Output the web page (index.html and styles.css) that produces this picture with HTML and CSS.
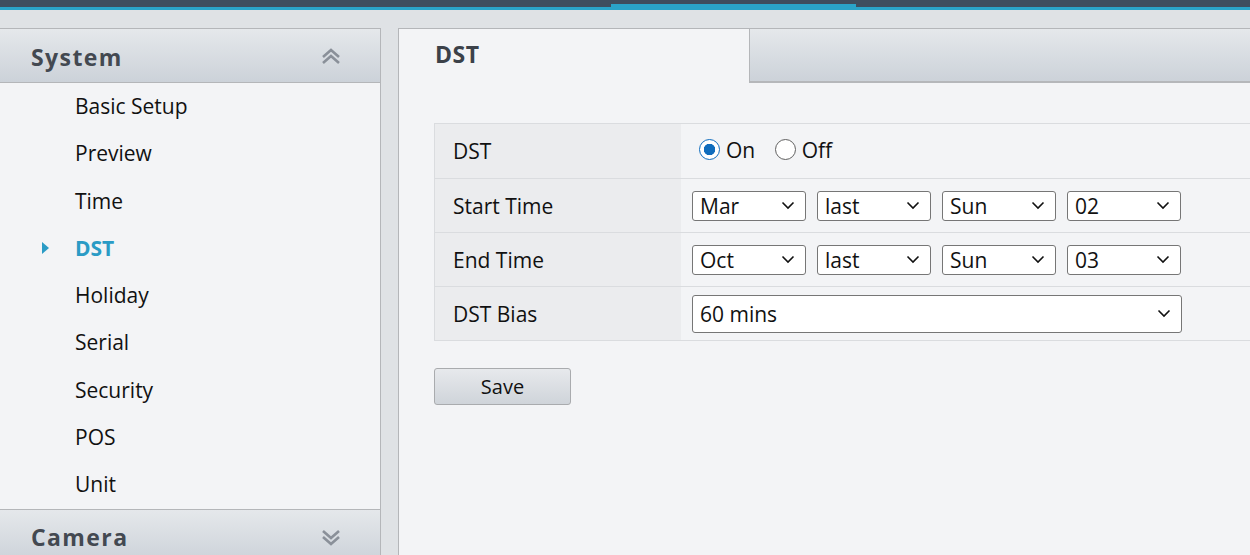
FILE: index.html
```html
<!DOCTYPE html>
<html lang="en">
<head>
    <meta charset="UTF-8">
    <title>DST</title>
    <link rel="stylesheet" href="styles.css">
</head>
<body>
    <div class="topbar">
        <div class="topbar-active"></div>
    </div>

    <div class="main">
        <div class="sidebar">
            <div class="group-head">
                <span>System</span>
                <svg class="chev" width="22" height="18" viewBox="0 0 22 18">
                    <path d="M3 9 L11 2 L19 9 M3 15 L11 8 L19 15" fill="none" stroke="#8a9099" stroke-width="2.6"/>
                </svg>
            </div>
            <ul class="menu">
                <li>Basic Setup</li>
                <li>Preview</li>
                <li>Time</li>
                <li class="active">DST</li>
                <li>Holiday</li>
                <li>Serial</li>
                <li>Security</li>
                <li>POS</li>
                <li>Unit</li>
            </ul>
            <div class="group-head">
                <span>Camera</span>
                <svg class="chev" width="22" height="18" viewBox="0 0 22 18">
                    <path d="M3 3 L11 10 L19 3 M3 9 L11 16 L19 9" fill="none" stroke="#8a9099" stroke-width="2.6"/>
                </svg>
            </div>
        </div>

        <div class="content">
            <div class="tabs">
                <div class="tab">DST</div>
                <div class="tab-rest"></div>
            </div>

            <table class="form">
                <tr>
                    <td class="label">DST</td>
                    <td class="value">
                        <label class="radio"><input type="radio" name="dst" checked> On</label>
                        <label class="radio"><input type="radio" name="dst"> Off</label>
                    </td>
                </tr>
                <tr>
                    <td class="label">Start Time</td>
                    <td class="value">
                        <div class="selects">
                            <select><option>Mar</option></select>
                            <select><option>last</option></select>
                            <select><option>Sun</option></select>
                            <select><option>02</option></select>
                        </div>
                    </td>
                </tr>
                <tr>
                    <td class="label">End Time</td>
                    <td class="value">
                        <div class="selects">
                            <select><option>Oct</option></select>
                            <select><option>last</option></select>
                            <select><option>Sun</option></select>
                            <select><option>03</option></select>
                        </div>
                    </td>
                </tr>
                <tr>
                    <td class="label">DST Bias</td>
                    <td class="value">
                        <select class="wide"><option>60 mins</option></select>
                    </td>
                </tr>
            </table>

            <button class="save">Save</button>
        </div>
    </div>
</body>
</html>
```

FILE: styles.css
```css
body {
    margin: 0;
    background-color: #dfe2e5;
    font-family: "Open Sans", "Noto Sans", sans-serif;
    color: #111;
    height: 555px;
    overflow: hidden;
}
.topbar {
    height: 7px;
    background-color: #3e4d5e;
    border-bottom: 3px solid #2aa3c8;
    display: flex;
    align-items: flex-end;
}
.topbar-active {
    margin-left: 611px;
    width: 245px;
    height: 3px;
    background-color: #2aa3c8;
}
.main {
    display: flex;
    gap: 17px;
    margin-top: 18px;
    height: 527px;
    overflow: hidden;
}
.sidebar {
    width: 381px;
    flex-shrink: 0;
    background-color: #f3f4f6;
    border-top: 1px solid #b4b6b9;
    border-right: 1px solid #b4b6b9;
    box-sizing: border-box;
    overflow: hidden;
}
.group-head {
    height: 54px;
    display: flex;
    align-items: center;
    justify-content: space-between;
    padding: 3px 38px 0 31px;
    box-sizing: border-box;
    background: linear-gradient(#e5e8eb, #ccd2d9);
    border-bottom: 1px solid #b4b6b9;
    font-size: 23px;
    font-weight: bold;
    letter-spacing: 1.4px;
    color: #434951;
}
.menu + .group-head {
    border-top: 1px solid #b4b6b9;
}
.menu {
    list-style: none;
    margin: 0;
    padding: 0;
}
.menu li {
    height: 47.3px;
    line-height: 47px;
    padding-left: 75px;
    font-size: 21px;
    position: relative;
}
.menu li.active {
    color: #2a9bc5;
    font-weight: bold;
}
.menu li.active::before {
    content: "";
    position: absolute;
    left: 42px;
    top: 17px;
    border-left: 7px solid #2a9bc5;
    border-top: 6px solid transparent;
    border-bottom: 6px solid transparent;
}
.content {
    flex: 1;
    background-color: #f3f4f6;
    border-top: 1px solid #b4b6b9;
    border-left: 1px solid #b4b6b9;
    overflow: hidden;
}
.tabs {
    display: flex;
    height: 54px;
}
.tab {
    width: 314px;
    padding-left: 36px;
    font-size: 23px;
    font-weight: bold;
    letter-spacing: 0.5px;
    color: #3b4149;
    line-height: 50px;
}
.tab-rest {
    flex: 1;
    background: linear-gradient(#e5e8eb, #ccd2d9);
    border-left: 1px solid #b4b6b9;
    border-bottom: 2px solid #b5b7ba;
}
.form {
    margin: 40px 0 0 35px;
    width: calc(100% - 35px);
    border-collapse: collapse;
    border: 1px solid #dadcdf;
    border-right: none;
}
.form td {
    border-bottom: 1px solid #dadcdf;
    height: 53px;
    padding: 0;
    font-size: 21px;
}
.form tr:first-child td {
    height: 54px;
}
.form .label {
    width: 228px;
    padding-left: 18px;
    background-color: #ebecee;
}
.form .value {
    padding-left: 11px;
}
.radio {
    display: inline-flex;
    align-items: center;
    gap: 6px;
    margin-right: 14px;
    margin-left: 7px;
}
.radio + .radio {
    margin-left: 0;
}
.radio input {
    appearance: none;
    margin: 0;
    width: 21px;
    height: 21px;
    border: 1.5px solid #606060;
    border-radius: 50%;
    background: #fff;
    box-sizing: border-box;
}
.radio input:checked {
    border-color: #0f6cbd;
    background: radial-gradient(circle, #0f6cbd 0 5.5px, #fff 6px);
}
.selects {
    display: flex;
    gap: 11px;
}
select {
    appearance: none;
    width: 114px;
    height: 30px;
    border: 1px solid #767676;
    border-radius: 3px;
    background: #fff url("data:image/svg+xml,%3Csvg xmlns='http://www.w3.org/2000/svg' width='14' height='9' viewBox='0 0 14 9'%3E%3Cpath d='M1.5 1.5 L7 7 L12.5 1.5' fill='none' stroke='%23111' stroke-width='1.6'/%3E%3C/svg%3E") no-repeat right 10px center;
    font-family: "Open Sans", "Noto Sans", sans-serif;
    font-size: 21px;
    color: #111;
    padding: 0 0 0 7px;
}
select.wide {
    width: 490px;
    height: 38px;
}
.save {
    margin: 27px 0 0 35px;
    width: 137px;
    height: 37px;
    border: 1px solid #a9abae;
    border-radius: 3px;
    background: linear-gradient(#e7e9ec, #cfd4da);
    font-family: "Open Sans", "Noto Sans", sans-serif;
    font-size: 20px;
    color: #111;
}
```
